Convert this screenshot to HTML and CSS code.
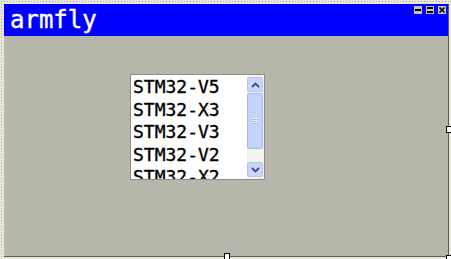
FILE: index.html
```html
<!DOCTYPE html>
<html>
<head>
<meta charset="UTF-8">
<link rel="stylesheet" href="styles.css">
</head>
<body>
  <div class="frame">
    <div class="window">
      <div class="titlebar">
        <span class="title">armfly</span>
        <div class="buttons">
          <span class="btn btn-min"></span>
          <span class="btn btn-max"></span>
          <span class="btn btn-close">
            <svg width="8" height="8" viewBox="0 0 8 8"><path d="M1.5 1.5 L6.5 6.5 M6.5 1.5 L1.5 6.5" stroke="#000" stroke-width="1.6"/></svg>
          </span>
        </div>
      </div>
      <div class="client">
        <div class="listbox">
          <ul class="items">
            <li>STM32-V5</li>
            <li>STM32-X3</li>
            <li>STM32-V3</li>
            <li>STM32-V2</li>
            <li>STM32-X2</li>
          </ul>
          <div class="scrollbar">
            <div class="sb-btn">
              <svg width="9" height="6" viewBox="0 0 9 6"><path d="M1 5 L4.5 1.5 L8 5" fill="none" stroke="#3b4d7a" stroke-width="1.8"/></svg>
            </div>
            <div class="sb-thumb"><span class="grip"></span></div>
            <div class="sb-track"></div>
            <div class="sb-btn">
              <svg width="9" height="6" viewBox="0 0 9 6"><path d="M1 1 L4.5 4.5 L8 1" fill="none" stroke="#3b4d7a" stroke-width="1.8"/></svg>
            </div>
          </div>
        </div>
      </div>
    </div>
    <span class="handle handle-right"></span>
    <span class="handle handle-bottom"></span>
    <span class="corner"></span>
  </div>
</body>
</html>
```

FILE: styles.css
```css
body
{
    margin: 0;
    padding: 0;
    background: #e9e7dc;
}

.frame
{
    position: relative;
    width: 451px;
    height: 259px;
    box-sizing: border-box;
    padding: 4px 2px 2px 4px;
    background-color: #e9e7dc;
    background-image: radial-gradient(#a9a797 40%, transparent 45%);
    background-size: 3px 3px;
}

.window
{
    display: flex;
    flex-direction: column;
    height: 100%;
    box-sizing: border-box;
    border-right: 1px solid #5a5a55;
    border-bottom: 1px solid #5a5a55;
    background: #b6b6aa;
}

.titlebar
{
    display: flex;
    justify-content: space-between;
    align-items: flex-start;
    height: 32px;
    background: #0000ff;
}

.title
{
    font-family: "DejaVu Sans Mono", monospace;
    font-size: 24px;
    line-height: 32px;
    color: #fff;
    padding-left: 6px;
    -webkit-text-stroke: 0.4px #fff;
}

.buttons
{
    display: flex;
    gap: 4px;
    padding: 2px 2px 0 0;
}

.btn
{
    position: relative;
    width: 8px;
    height: 8px;
    background: #c4c4bc;
}

.btn svg
{
    display: block;
}

.btn-min::after
{
    content: "";
    position: absolute;
    left: 1px;
    right: 1px;
    top: 3px;
    height: 2px;
    background: #000;
}

.btn-max::before,
.btn-max::after
{
    content: "";
    position: absolute;
    left: 1px;
    right: 1px;
    height: 2px;
    background: #000;
}

.btn-max::before { top: 1px; }
.btn-max::after { top: 5px; }

.client
{
    flex: 1;
    padding: 38px 0 0 126px;
}

.listbox
{
    display: flex;
    width: 135px;
    height: 106px;
    box-sizing: border-box;
    border: 1px solid #8e8e86;
    background: #fff;
    overflow: hidden;
}

.items
{
    flex: 1;
    margin: 0;
    padding: 1px 0 0 2px;
    list-style: none;
    font-family: "DejaVu Sans Mono", monospace;
    font-size: 18px;
    line-height: 22.5px;
    color: #000;
    -webkit-text-stroke: 0.35px #000;
    overflow: hidden;
}

.scrollbar
{
    display: flex;
    flex-direction: column;
    width: 16px;
    padding: 2px 1px 2px 0;
    background: #f3f3ee;
}

.sb-btn
{
    display: flex;
    justify-content: center;
    align-items: center;
    height: 15px;
    box-sizing: border-box;
    border: 1px solid #b7c6f0;
    border-radius: 2px;
    background: #c9d6fa;
}

.sb-thumb
{
    display: flex;
    justify-content: center;
    align-items: center;
    height: 56px;
    margin-top: 1px;
    box-sizing: border-box;
    border: 1px solid #a9bcf0;
    border-radius: 2px;
    background: #c5d3fb;
}

.grip
{
    width: 6px;
    height: 6px;
    background: repeating-linear-gradient(#eef2ff 0 1px, #a9b9e6 1px 2px);
}

.sb-track
{
    flex: 1;
}

.handle
{
    position: absolute;
    width: 4px;
    height: 5px;
    background: #fff;
    border: 1px solid #000;
}

.handle-right
{
    right: 0;
    top: 126px;
    border-right: none;
}

.handle-bottom
{
    left: 224px;
    bottom: 0;
    border-bottom: none;
}

.corner
{
    position: absolute;
    right: 0;
    bottom: 0;
    width: 4px;
    height: 3px;
    border-top: 1px solid #000;
    border-left: 1px solid #000;
    background: #fff;
}
```
